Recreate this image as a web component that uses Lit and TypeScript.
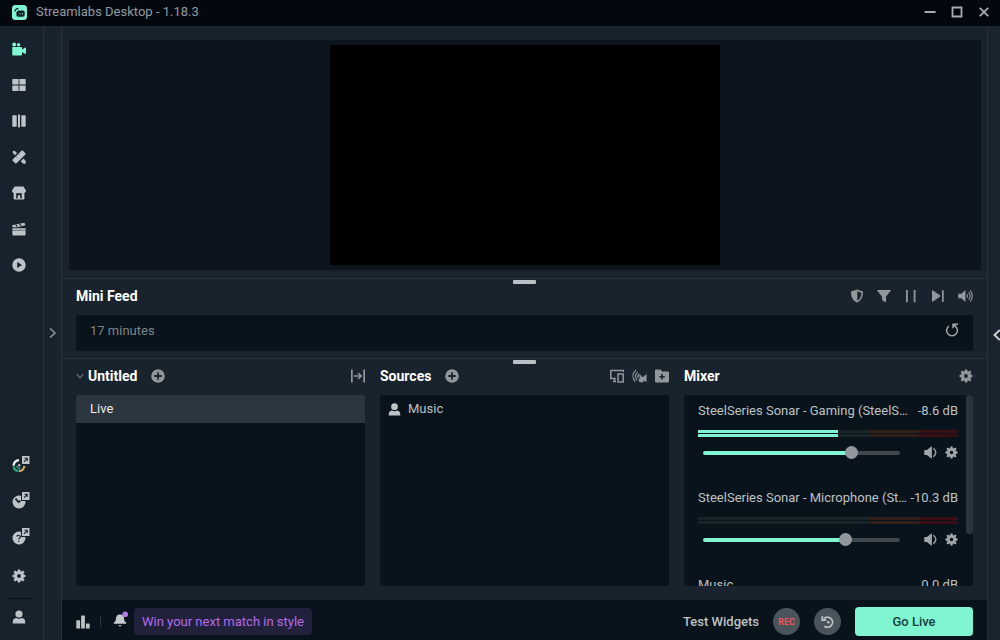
import { LitElement, html, css, svg, SVGTemplateResult } from "lit";
import { customElement, property } from "lit/decorators.js";

const gearShape = svg`<path fill-rule="evenodd" d="M5.9 .5h2.2l.4 1.700.9.4L11 1.500l1.500 1.500-1.100 1.600.4.9 1.700.4v2.200l-1.700.4-.4.9 1.100 1.600-1.500 1.500-1.600-1.100-.9.4-.4 1.700H5.900l-.4-1.700-.9-.4L3 12.500 1.500 11l1.100-1.600-.4-.9L.5 8.100V5.900l1.700-.4.4-.9L1.500 3 3 1.500l1.600 1.100.9-.4zM7 5.100A1.900 1.900 0 1 0 7 8.900 1.900 1.900 0 1 0 7 5.100z"/>`;
const personShape = svg`<circle cx="7" cy="4" r="3.600"/><path d="M.8 13.500v-1.800C.8 9.200 2.600 8.200 4.300 8c1.600 1 3.800 1 5.400 0 1.700.2 3.500 1.200 3.500 3.700v1.800z"/>`;
const badgeShape = svg`<path class="cut" d="M9-1h10v10H9z"/><path d="M10 0h7.500v8H10z"/><path class="ink" d="M12 5.800l3-3.300M12.500 2.300h2.700V5"/>`;

const ICONS: Record<string, { box: string; shape: SVGTemplateResult }> = {
  editor: {
    box: "0 0 14 14",
    shape: svg`<circle cx="2.200" cy="2.400" r="2"/><circle cx="6.600" cy="2.800" r="1.700"/><path d="M.3 5h8.900c.5 0 .8.300.8.800v1.600l3.300-1.900c.4-.2.700 0 .7.400v5.600c0 .4-.3.600-.7.400L10 10.200v2.500c0 .5-.3.800-.8.800H1c-.5 0-.8-.3-.8-.8z"/>`,
  },
  layout: {
    box: "0 0 14 14",
    shape: svg`<path d="M1 1h5.600v5.600H.3V1.700c0-.4.300-.7.700-.7zM7.400 1H13c.4 0 .7.300.7.700v4.900H7.400zM.3 7.400h6.300V13H1c-.4 0-.7-.3-.7-.7zM7.400 7.400h6.300v4.900c0 .4-.3.700-.7.700H7.400z"/>`,
  },
  columns: {
    box: "0 0 14 14",
    shape: svg`<rect x=".3" y="1.300" width="4.400" height="11.400" rx=".6"/><rect x="6" y=".6" width="2" height="12.800" rx=".4"/><rect x="9.300" y="1.300" width="4.400" height="11.400" rx=".6"/>`,
  },
  themes: {
    box: "0 0 14 14",
    shape: svg`<path d="M.6 2.600C.3 1.300 1.300.4 2.600.7L5 3 3 5.200z"/><path d="M.9 9.200 9.200.9c.6-.6 1.300-.6 1.900 0l2 2c.6.6.6 1.300 0 1.900l-8.300 8.300c-.6.6-1.300.6-1.900 0l-2-2c-.6-.6-.6-1.300 0-1.900z"/><path d="M8.800 11.300l2.700-2.700 2 2.200.3 3-3-.4z"/><path class="ink faint" d="M6.300 3.900l1.100 1.100M3.900 6.300l1.100 1.100"/>`,
  },
  store: {
    box: "0 0 14 14",
    shape: svg`<path fill-rule="evenodd" d="M2.600.6h8.800L14 4.600c.1 1.300-.6 2.200-1.600 2.400v5.600c0 .5-.3.800-.8.800H2.400c-.5 0-.8-.3-.8-.8V7C.6 6.800-.1 5.900 0 4.600zM4.200 7.200v5.200h1.500V9.300h2.600v3.100h1.500V7.200z"/>`,
  },
  clapper: {
    box: "0 0 14 14",
    shape: svg`<path d="M.4 6.300h13.200v6.200c0 .6-.4 1-1 1H1.400c-.6 0-1-.4-1-1z"/><path d="M.4 5.300 .3 4.100C.2 3.500.5 3.100 1.100 3L12.500.8l.9 2.400L5.300 5.300z"/><path class="ink" d="M3.600 2.600l1.900 2M7.400 1.800l1.900 2"/><path class="ink faint" d="M.4 8.300h13.200"/>`,
  },
  play: {
    box: "0 0 14 14",
    shape: svg`<path fill-rule="evenodd" d="M7 .3a6.700 6.700 0 1 1 0 13.400A6.700 6.700 0 1 1 7 .3zM5.200 4v6L10 7z"/>`,
  },
  dashboard: {
    box: "0 0 18 17",
    shape: svg`<path class="arc white" d="M1.600 9.800A5.300 5.300 0 0 1 7 4.300"/><path class="arc green" d="M1.600 10.500A5.300 5.300 0 0 0 6.600 15"/><path class="arc orange" d="M7 15a5.300 5.300 0 0 0 5.300-5"/><path class="thin green" d="M4.700 9.800a2.300 2.300 0 0 0 3.600 2"/><circle cx="7.200" cy="9.300" r="1.200"/>${badgeShape}`,
  },
  cloudbot: {
    box: "0 0 18 17",
    shape: svg`<circle cx="7" cy="10" r="6.500"/><path class="ink thick" d="M3.500 6.700l3 3.300 2-1.200"/>${badgeShape}`,
  },
  help: {
    box: "0 0 18 17",
    shape: svg`<circle cx="7" cy="10" r="6.500"/><path class="ink" d="M4.700 8.500C4.900 7 8.500 7 8.400 8.900c0 1.100-1.700 1.200-1.700 2.700M6.700 12.700v1.400"/>${badgeShape}`,
  },
  gear: { box: "0 0 14 14", shape: gearShape },
  person: { box: "0 0 14 14", shape: personShape },
  shield: {
    box: "0 0 14 14",
    shape: svg`<path fill-rule="evenodd" d="M7 .6l6 2C13.100 8 11.300 11.800 7 13.600 2.700 11.800.9 8 1 2.600zM7.300 2.300v9.500c2.700-1.400 4.100-4.100 4.100-8.100z"/>`,
  },
  filter: {
    box: "0 0 14 14",
    shape: svg`<path d="M.9 1h12.200c.6 0 .8.700.5 1.100L9 7.400v5.200c0 .6-.6.900-1.100.5L5.400 11.300C5.100 11 5 10.800 5 10.500V7.400L.4 2.100C.1 1.700.3 1 .9 1z"/>`,
  },
  pause: { box: "0 0 14 14", shape: svg`<path d="M2 1h1.800v12.200H2zM9.700 1h1.800v12.200H9.700z"/>` },
  skip: { box: "0 0 14 14", shape: svg`<path d="M1 1.900c0-.6.600-.9 1.100-.5l7.100 5.100c.4.300.4.700 0 1l-7.100 5.100c-.5.400-1.100.1-1.100-.5zM11 1.200h1.700v11.800H11z"/>` },
  volume: {
    box: "0 0 15 14",
    shape: svg`<path d="M.3 4.700h2.900l3.400-3c.4-.4.900-.2.900.4v9.800c0 .6-.5.800-.9.400l-3.400-3H.3z"/><path class="line" d="M9 5.200q1.300 1.800 0 3.600M10.600 3.300q3 3.700 0 7.400M12.100 1.400q4.400 5.600 0 11.200"/>`,
  },
  speaker: {
    box: "0 0 14 14",
    shape: svg`<path d="M.2 5c0-.4.300-.7.700-.7h2.200l4.300-3.500c.5-.4 1.100-.1 1.100.5v11.400c0 .6-.6.900-1.100.5l-4.300-3.500H.9c-.4 0-.7-.3-.7-.7z"/><path class="line mid" d="M10 2.500q5.600 4.500 0 9"/>`,
  },
  refresh: {
    box: "0 0 14 14",
    shape: svg`<path class="line mid" d="M3.800 3.100A5.400 5.400 0 1 0 10.200 3.100"/><path d="M7.300 .5h5.700V2h-2.500l.9 1.200-1.100 1.200-1.500-1.200v2H7.300z"/>`,
  },
  plus: {
    box: "0 0 14 14",
    shape: svg`<path fill-rule="evenodd" d="M7 .2a6.800 6.800 0 1 1 0 13.600A6.800 6.800 0 1 1 7 .2zM6.100 3.300v2.800H3.300v1.800h2.800v2.800h1.800V7.900h2.800V6.100H7.900V3.300z"/>`,
  },
  transition: {
    box: "0 0 14 14",
    shape: svg`<path d="M0 .6h1.700v12.800H0zM12.300.6H14v12.800h-1.700z"/><path class="line mid" d="M3 7h7M7.200 4l3 3-3 3"/>`,
  },
  screens: {
    box: "0 0 14 14",
    shape: svg`<path class="line mid" d="M13.300 3V1.500H.8v8h5M3 12.500h3M4.500 9.500v3M8 5h5.200v8H8z"/>`,
  },
  cast: {
    box: "0 0 15 14",
    shape: svg`<path class="line" d="M4 1Q-2 6 3.300 12.700M5.700 2.900Q1.800 6.500 5 11.300M7.200 4.600Q5 6.500 6.200 9.300"/><path d="M7 6.300l1.300-.8 1.700 2.400h1L14.600 5v8L11.500 11.400V13.200H7.800Q6.400 12.300 6.600 10.400L8 9.200z"/>`,
  },
  folder: {
    box: "0 0 14 14",
    shape: svg`<path fill-rule="evenodd" d="M1.200.6h4.300l1.700 1.900h5.600c.7 0 1.200.5 1.200 1.200v8.600c0 .7-.5 1.200-1.200 1.200H1.200c-.7 0-1.200-.5-1.200-1.200V1.800C0 1.100.5.6 1.200.6zM6.200 5.100V7H4.300v1.600h1.900v1.900h1.600V8.600h1.900V7H7.800V5.100z"/>`,
  },
  stats: {
    box: "0 0 14 14",
    shape: svg`<rect x=".3" y="5.300" width="3.800" height="8.300" rx=".4"/><rect x="5.100" y=".5" width="3.800" height="13.100" rx=".4"/><rect x="9.900" y="8.500" width="3.800" height="5.100" rx=".4"/>`,
  },
  bell: {
    box: "0 0 16 17",
    shape: svg`<path d="M6 3.600h2c2 .6 3 2 3.100 4.500.1 2 .8 2.700 2.200 3.700v1H.7v-1c1.400-1 2.100-1.700 2.200-3.700C3 5.600 4 4.200 6 3.600zM5.200 14.300h3.600q-1.800 2.600-3.600 0z"/><circle class="dot" cx="12.200" cy="3.200" r="2.800"/>`,
  },
  replay: {
    box: "0 0 14 14",
    shape: svg`<path class="line bold" d="M3 3.700A5 5 0 1 1 3.500 11.200M1.300 1.200v3.900h4"/><circle cx="7.300" cy="7.300" r="1.300"/>`,
  },
  down: { box: "0 0 8 8", shape: svg`<path class="line" d="M.8 2.200 4 6l3.200-3.800"/>` },
  right: { box: "0 0 8 12", shape: svg`<path class="line mid" d="M1.200 1.500 6 6l-4.800 4.500"/>` },
  left: { box: "0 0 8 12", shape: svg`<path class="line bold" d="M6.800 1 1.500 6l5.300 5"/>` },
  minimize: { box: "0 0 12 12", shape: svg`<path d="M.6 5h11v2H.6z"/>` },
  maximize: { box: "0 0 12 12", shape: svg`<path class="line bold" d="M1.500 1.500h9v9h-9z"/>` },
  close: { box: "0 0 12 12", shape: svg`<path class="line bold" d="M1.800 1.800l8.400 8.400M10.200 1.800l-8.400 8.400"/>` },
  logo: {
    box: "0 0 15 15",
    shape: svg`<rect width="15" height="15" rx="3.500"/><path class="hole" d="M6 5.500h4.700c1.300 0 2 .7 2 2V9.700c0 1.300-.7 2-2 2H6.400c-1.300 0-2-.7-2-2V7.300z"/><path class="ink" d="M2.800 6.500Q3.300 3.700 6.500 3.400"/><path class="lit" d="M7.700 8h.8v1.600h-.8zM10 8h.8v1.600H10z"/>`,
  },
};

@customElement("sl-icon")
export class SlIcon extends LitElement {
  @property() name = "";

  static styles = css`
    :host { display: inline-flex; flex: none; }
    .glyph { display: block; width: auto; height: var(--icon-size, 14px); overflow: visible; fill: currentColor; }
    .line { fill: none; stroke: currentColor; stroke-width: 1.1; }
    .mid { stroke-width: 1.5; }
    .bold { stroke-width: 1.8; }
    .ink { fill: none; stroke: #17212b; stroke-width: 1.1; }
    .faint { stroke-width: 0.5; }
    .thick { stroke-width: 1.8; }
    .cut, .hole { fill: #17212b; }
    .lit { fill: #80f5d2; }
    .dot { fill: #b57cf0; }
    .arc { fill: none; stroke-width: 2.4; }
    .thin { fill: none; stroke-width: 1.4; }
    .white { stroke: #e6ecef; }
    .green { stroke: #2f9c74; }
    .orange { stroke: #d6a562; }
  `;

  render() {
    const icon = ICONS[this.name];
    return icon
      ? html`<svg class="glyph" viewBox=${icon.box} aria-hidden="true">${icon.shape}</svg>`
      : null;
  }
}

interface Channel {
  id: string;
  name: string;
  db: string;
  level: number;
  volume: number;
}

const CHANNELS: Channel[] = [
  { id: "gaming", name: "SteelSeries Sonar - Gaming (SteelS…", db: "-8.6 dB", level: 54, volume: 77 },
  { id: "mic", name: "SteelSeries Sonar - Microphone (St…", db: "-10.3 dB", level: 0, volume: 74 },
  { id: "music", name: "Music", db: "0.0 dB", level: 0, volume: 100 },
];

const NAV = [
  ["editor", "Editor"],
  ["layout", "Layout Editor"],
  ["columns", "Studio"],
  ["themes", "Themes"],
  ["store", "App Store"],
  ["clapper", "Highlighter"],
  ["play", "Recordings"],
];

const LINKS = [
  ["dashboard", "Dashboard"],
  ["cloudbot", "Cloudbot"],
  ["help", "Get Help"],
];

const FEED_TOOLS = [
  ["shield", "Safe mode"],
  ["filter", "Filter"],
  ["pause", "Pause queue"],
  ["skip", "Skip alert"],
  ["volume", "Mute alerts"],
];

@customElement("app-root")
export class AppRoot extends LitElement {
  static styles = css`
    * { box-sizing: border-box; }
    :host {
      display: grid;
      grid-template-rows: 26px minmax(0, 1fr);
      height: 100vh;
      overflow: hidden;
      background: #19232d;
      color: #bdc2c4;
      font: 13px/16px Roboto, "Liberation Sans", sans-serif;
    }
    button {
      display: inline-flex;
      align-items: center;
      justify-content: center;
      margin: 0;
      padding: 0;
      border: 0;
      background: none;
      color: inherit;
      font: inherit;
      cursor: pointer;
    }
    h2 { margin: 0; font-size: 14px; line-height: 16px; font-weight: 700; color: #fff; }
    ul { margin: 0; padding: 0; list-style: none; }

    .titlebar { display: flex; align-items: center; gap: 9px; padding: 0 10px 2px 12px; background: #03080f; color: #929aa0; }
    .logo { color: #80f5d2; --icon-size: 15px; }
    .title { flex: 1; }
    .window { display: flex; gap: 15px; --icon-size: 12px; color: #a5abb0; }

    .body { display: grid; grid-template-columns: 44px 18px minmax(0, 1fr) 13px; min-height: 0; }
    .sidebar { display: flex; flex-direction: column; padding: 5px 5px 5px 0; border-right: 1px solid #25323c; background: #17222c; }
    .nav { display: flex; flex-direction: column; }
    .nav-item { display: flex; align-items: center; justify-content: center; width: 38px; height: 36px; color: #bdc4c9; }
    .active { color: #80f5d2; }
    .external { padding-left: 3px; --icon-size: 17px; }
    .bottom { margin-top: auto; }
    .spaced { margin: 4px 0; }
    .rule { height: 1px; margin: 0 4px 0 7px; border: 0; background: #080f16; }
    .gutter { border-right: 1px solid #25323c; background: #18232d; color: #8f989e; --icon-size: 12px; }
    .gutter-right { overflow: hidden; justify-content: flex-start; padding: 4px 0 0 5px; border-left: 1px solid #25323c; background: #19242e; color: #d5d9dc; --icon-size: 12px; }

    .main { display: grid; grid-template-rows: minmax(0, 252fr) auto minmax(0, 242fr) auto; min-width: 0; min-height: 0; }
    .preview { min-height: 0; padding: 14px 6px 8px 7px; }
    .stage { display: flex; justify-content: center; height: 100%; padding: 5px 0; background: #0c151d; }
    .video { height: 100%; aspect-ratio: 39 / 22; background: #000; }
    .dock { position: relative; border-top: 1px solid #26323b; }
    .handle { position: absolute; top: 1px; left: 50%; width: 23px; height: 4px; margin-left: -12px; border-radius: 1px; background: #b9c0c6; }
    .head { display: flex; align-items: center; height: 36px; padding-bottom: 2px; color: #91979a; }
    .tools { display: flex; align-items: center; margin-left: auto; gap: 8px; }
    .wide { gap: 13px; }

    .feed { padding: 0 14px 7px; }
    .feed-row { display: flex; align-items: flex-start; justify-content: space-between; min-height: 36px; padding: 8px 14px; border-radius: 3px; background: #09131b; color: #7d858b; }
    .feed-row button { color: #a0a6aa; }

    .docks { min-height: 0; display: grid; grid-template-columns: repeat(3, minmax(0, 1fr)); gap: 15px; padding: 0 14px 14px; }
    .column { display: flex; flex-direction: column; min-height: 0; }
    .collection { gap: 4px; --icon-size: 8px; color: #6f7a82; }
    .add { margin-left: 14px; }
    .list { flex: 1; min-height: 0; overflow: hidden; border-radius: 3px; background: #09131b; }
    .scene { padding: 6px 14px; background: #2c363f; color: #e9ecee; }
    .source { display: flex; align-items: center; gap: 7px; padding: 6px 8px; --icon-size: 13px; }

    .mixer { display: flex; align-items: flex-start; }
    .channels { flex: 1; min-width: 0; padding: 0 8px 0 14px; }
    .thumb { width: 7px; height: 73%; border-radius: 3px; background: #2b353d; }
    .channel { height: 87px; padding-top: 8px; }
    .label { display: flex; justify-content: space-between; white-space: nowrap; }
    .meter { display: grid; grid-template-rows: 3px 3px; gap: 1px; margin: 11px 0 9px; }
    .bar { background: linear-gradient(90deg, #172528 66%, #33201a 66% 85%, #3b0d14 85%); }
    .level { height: 100%; background: #80f5d2; }
    .controls { display: flex; align-items: center; gap: 8px; padding-left: 5px; color: #a0a6aa; --icon-size: 13px; }
    .slider {
      flex: 1; min-width: 0; height: 13px; margin: 0 16px 0 0; appearance: none; background: none;
    }
    .slider::-webkit-slider-runnable-track {
      height: 4px; border-radius: 2px;
      background: linear-gradient(90deg, #80f5d2 var(--value), #40484f var(--value));
    }
    .slider::-webkit-slider-thumb {
      appearance: none; width: 13px; height: 13px; margin-top: -5px; border-radius: 50%; background: #91979d;
    }

    .footer { display: flex; align-items: center; height: 40px; padding: 3px 14px 0; background: #09131b; }
    .footer-left { display: flex; align-items: center; }
    .pipe { width: 1px; height: 11px; margin: 0 12px 0 10px; background: #2b3740; }
    .alerts { --icon-size: 17px; margin-bottom: 4px; color: #c5cacd; }
    .promo { height: 27px; margin-left: 5px; padding: 0 8px; border-radius: 4px; background: #22213c; color: #b36be8; text-decoration: none; line-height: 27px; }
    .footer-right { display: flex; align-items: center; gap: 14px; margin-left: auto; }
    .test { font-weight: 500; }
    .round { width: 27px; height: 27px; border-radius: 50%; background: #4a545c; }
    .rec { color: #f5525a; font-size: 9px; font-weight: 700; }
    .live { width: 118px; height: 29px; border-radius: 4px; background: #80f5d2; color: #17403c; font-weight: 500; }
  `;

  private tool(icon: string, label: string, cls = "") {
    return html`<button class=${cls} aria-label=${label} title=${label}><sl-icon name=${icon}></sl-icon></button>`;
  }

  private channel(c: Channel) {
    return html`
      <li class="channel">
        <div class="label">
          <label for=${c.id}>${c.name}</label>
          <span>${c.db}</span>
        </div>
        <div class="meter">
          <div class="bar"><div class="level" style="width:${c.level}%"></div></div>
          <div class="bar"><div class="level" style="width:${c.level}%"></div></div>
        </div>
        <div class="controls">
          <input class="slider" id=${c.id} type="range" min="0" max="100" .value=${String(c.volume)} style="--value:${c.volume}%" />
          ${this.tool("speaker", "Mute")} ${this.tool("gear", "Audio settings")}
        </div>
      </li>
    `;
  }

  render() {
    return html`
      <header class="titlebar">
        <sl-icon class="logo" name="logo"></sl-icon>
        <span class="title">Streamlabs Desktop - 1.18.3</span>
        <div class="window">
          ${this.tool("minimize", "Minimize")} ${this.tool("maximize", "Maximize")} ${this.tool("close", "Close")}
        </div>
      </header>
      <div class="body">
        <aside class="sidebar">
          <nav class="nav">
            ${NAV.map(([icon, label], i) => this.tool(icon, label, i === 0 ? "nav-item active" : "nav-item"))}
          </nav>
          <div class="nav bottom">
            ${LINKS.map(([icon, label]) => html`
              <a class="nav-item external" href="#" aria-label=${label}><sl-icon name=${icon}></sl-icon></a>
            `)}
            ${this.tool("gear", "Settings", "nav-item spaced")}
            <hr class="rule" />
            ${this.tool("person", "Account", "nav-item")}
          </div>
        </aside>
        ${this.tool("right", "Expand navigation", "gutter")}
        <main class="main">
          <section class="preview"><div class="stage"><div class="video"></div></div></section>
          <section class="dock feed">
            <div class="handle"></div>
            <div class="head">
              <h2>Mini Feed</h2>
              <div class="tools wide">${FEED_TOOLS.map(([icon, label]) => this.tool(icon, label))}</div>
            </div>
            <div class="feed-row"><span>17 minutes</span>${this.tool("refresh", "Replay alert")}</div>
          </section>
          <section class="dock docks">
            <div class="handle"></div>
            <div class="column">
              <div class="head">
                <button class="collection"><sl-icon name="down"></sl-icon><h2>Untitled</h2></button>
                ${this.tool("plus", "Add scene", "add")}
                <div class="tools">${this.tool("transition", "Scene transitions")}</div>
              </div>
              <ul class="list"><li class="scene">Live</li></ul>
            </div>
            <div class="column">
              <div class="head">
                <h2>Sources</h2>
                ${this.tool("plus", "Add source", "add")}
                <div class="tools">
                  ${this.tool("screens", "Dual output")} ${this.tool("cast", "Guest cam")} ${this.tool("folder", "Add group")}
                </div>
              </div>
              <ul class="list"><li class="source"><sl-icon name="person"></sl-icon>Music</li></ul>
            </div>
            <div class="column">
              <div class="head">
                <h2>Mixer</h2>
                <div class="tools">${this.tool("gear", "Mixer settings")}</div>
              </div>
              <div class="list mixer">
                <ul class="channels">${CHANNELS.map((c) => this.channel(c))}</ul>
                <div class="thumb"></div>
              </div>
            </div>
          </section>
          <footer class="footer">
            <div class="footer-left">
              ${this.tool("stats", "Performance")}
              <span class="pipe"></span>
              ${this.tool("bell", "Notifications", "alerts")}
              <a class="promo" href="#">Win your next match in style</a>
            </div>
            <div class="footer-right">
              <button class="test">Test Widgets</button>
              <button class="round rec">REC</button>
              ${this.tool("replay", "Replay buffer", "round")}
              <button class="live">Go Live</button>
            </div>
          </footer>
        </main>
        ${this.tool("left", "Open chat", "gutter-right")}
      </div>
    `;
  }
}
